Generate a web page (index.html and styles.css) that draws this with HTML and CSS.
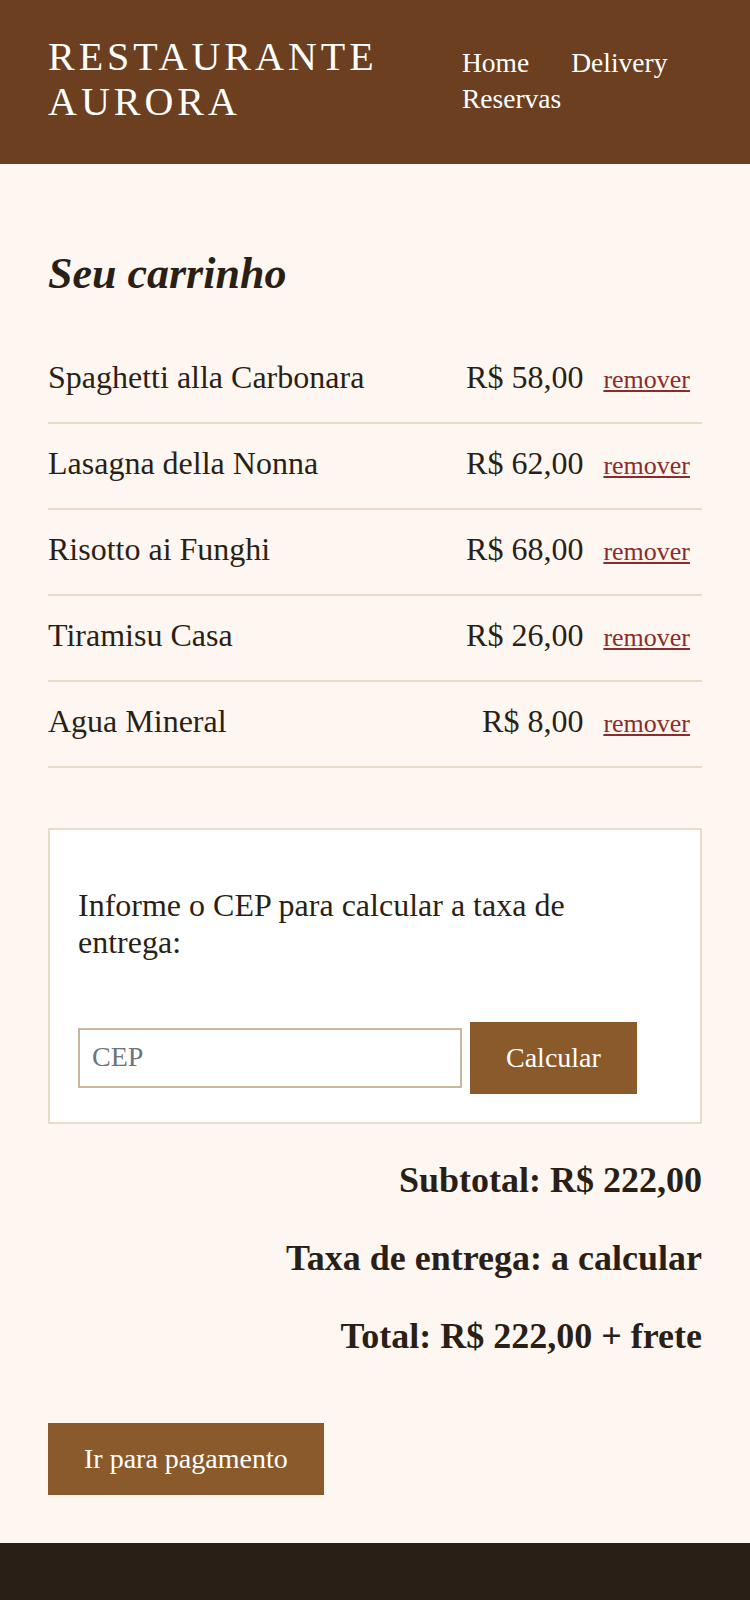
FILE: index.html
```html
<!DOCTYPE html>
<html lang="pt-BR">
<head>
    <meta charset="UTF-8">
    <meta name="viewport" content="width=device-width, initial-scale=1.0">
    <title>Seu carrinho - Restaurante Aurora</title>
    <link rel="stylesheet" href="styles.css">
</head>
<body>

    <!-- Header -->
    <header class="site-header">
        <h1 class="logo">Restaurante Aurora</h1>
        <nav class="main-nav">
            <a href="#">Home</a>
            <a href="#">Delivery</a>
            <a href="#">Reservas</a>
        </nav>
    </header>

    <main class="cart">
        <h2>Seu carrinho</h2>

        <!-- Cart items -->
        <ul class="cart-list">
            <li class="cart-item">
                <span class="item-name">Spaghetti alla Carbonara</span>
                <span class="item-actions">
                    <span class="item-price">R$ 58,00</span>
                    <button class="remove-btn">remover</button>
                </span>
            </li>
            <li class="cart-item">
                <span class="item-name">Lasagna della Nonna</span>
                <span class="item-actions">
                    <span class="item-price">R$ 62,00</span>
                    <button class="remove-btn">remover</button>
                </span>
            </li>
            <li class="cart-item">
                <span class="item-name">Risotto ai Funghi</span>
                <span class="item-actions">
                    <span class="item-price">R$ 68,00</span>
                    <button class="remove-btn">remover</button>
                </span>
            </li>
            <li class="cart-item">
                <span class="item-name">Tiramisu Casa</span>
                <span class="item-actions">
                    <span class="item-price">R$ 26,00</span>
                    <button class="remove-btn">remover</button>
                </span>
            </li>
            <li class="cart-item">
                <span class="item-name">Agua Mineral</span>
                <span class="item-actions">
                    <span class="item-price">R$ 8,00</span>
                    <button class="remove-btn">remover</button>
                </span>
            </li>
        </ul>

        <!-- Delivery fee -->
        <section class="shipping-box">
            <p>Informe o CEP para calcular a taxa de entrega:</p>
            <form class="cep-form" onsubmit="return false;">
                <input type="text" class="cep-input" placeholder="CEP">
                <button type="submit" class="btn">Calcular</button>
            </form>
        </section>

        <!-- Totals -->
        <div class="summary">
            <p>Subtotal: R$ 222,00</p>
            <p>Taxa de entrega: a calcular</p>
            <p>Total: R$ 222,00 + frete</p>
        </div>

        <div class="checkout">
            <button class="btn">Ir para pagamento</button>
        </div>
    </main>

    <footer class="site-footer"></footer>

</body>
</html>
```

FILE: styles.css
```css
* {
    margin: 0;
    padding: 0;
    box-sizing: border-box;
}

body {
    font-family: 'Liberation Serif', 'Times New Roman', serif;
    background: #fef7f1;
    color: #2a1f16;
}

/* Header */
.site-header {
    display: flex;
    align-items: flex-start;
    justify-content: space-between;
    background: #6b3f1f;
    padding: 34px 48px 40px;
}

.logo {
    flex: 1 1 auto;
    font-size: 40px;
    line-height: 45px;
    font-weight: normal;
    text-transform: uppercase;
    letter-spacing: 4px;
    color: #fff;
}

.main-nav {
    flex: 0 0 240px;
    display: flex;
    flex-wrap: wrap;
    column-gap: 42px;
    row-gap: 3.5px;
    margin-top: 13px;
}

.main-nav a {
    font-size: 27.5px;
    color: #fff;
    text-decoration: none;
}

/* Cart */
.cart {
    padding: 48px 48px 48px;
}

.cart h2 {
    font-size: 44px;
    font-style: italic;
    font-weight: bold;
    margin: 36px 0 39px;
}

.cart-list {
    list-style: none;
}

.cart-item {
    display: flex;
    align-items: baseline;
    justify-content: space-between;
    padding: 21px 0 27px;
    border-bottom: 2px solid #e8dcc8;
    font-size: 32px;
    line-height: 36px;
}

.item-actions {
    display: flex;
    align-items: baseline;
    gap: 8px;
}

.remove-btn {
    font-family: inherit;
    font-size: 26px;
    color: #8b2c2c;
    text-decoration: underline;
    background: none;
    border: none;
    padding: 0 12px;
    cursor: pointer;
}

/* Shipping box */
.shipping-box {
    margin-top: 60px;
    background: #fff;
    border: 2px solid #e8dcc8;
    padding: 28px;
}

.shipping-box p {
    font-size: 32px;
    margin: 29px 0 61px;
}

.cep-form {
    display: flex;
    align-items: center;
    gap: 8px;
}

.cep-input {
    width: 384px;
    font-family: inherit;
    font-size: 28px;
    padding: 11px 12px 13px;
    border: 2px solid #c8b79b;
    background: #fff;
    color: #2a1f16;
}

.cep-input::placeholder {
    color: #6c7480;
}

.btn {
    font-family: inherit;
    font-size: 28px;
    color: #fff;
    background: #8b5a2b;
    border: none;
    padding: 20px 36px;
    cursor: pointer;
}

/* Totals */
.summary {
    display: flex;
    flex-direction: column;
    gap: 36px;
    margin-top: 35px;
    text-align: right;
}

.summary p {
    font-size: 36px;
    font-weight: bold;
}

.checkout {
    margin-top: 66px;
}

/* Footer */
.site-footer {
    background: #2a1f17;
    height: 120px;
}
```
